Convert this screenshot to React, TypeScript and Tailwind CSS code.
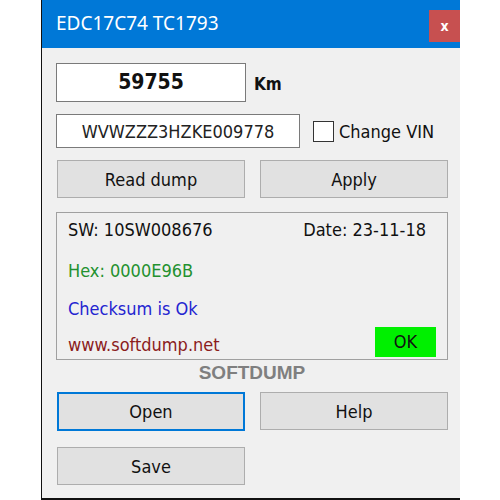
import React from 'react';

const ui = { fontFamily: '"DejaVu Sans Condensed", "DejaVu Sans", sans-serif' };

function WinButton({ label, focused }: { label: string; focused?: boolean }) {
    return (
        <button
            className={
                focused
                    ? 'flex h-[39px] w-[188px] items-center justify-center border-2 border-[#0078d7] bg-[#e1e1e1] text-[18px] text-[#111]'
                    : 'flex h-[38px] w-[188px] items-center justify-center border border-[#adadad] bg-[#e1e1e1] text-[18px] text-[#111]'
            }
            style={ui}
        >
            {label}
        </button>
    );
}

export default function App() {
    return (
        <div className="flex h-[500px] w-[500px] bg-white">
            <div className="ml-[41px] flex h-[500px] w-[419px] flex-col border-b-2 border-l border-[#111] bg-[#f0f0f0]">
                {/* title bar */}
                <div className="flex h-[48px] items-start justify-between bg-[#0078d7]">
                    <span
                        className="mt-[9px] ml-[14px] text-[19px] text-white"
                        style={{ fontFamily: '"Noto Sans", "Open Sans", sans-serif' }}
                    >
                        EDC17C74 TC1793
                    </span>
                    <div className="mt-[10px] flex h-[32px] w-[31px] items-center justify-center bg-[#c75050] text-[14px] font-bold text-white" style={ui}>
                        x
                    </div>
                </div>

                <div className="flex flex-col pl-[14px]" style={ui}>
                    {/* km */}
                    <div className="mt-[15px] flex items-center gap-[8px]">
                        <div className="flex h-[39px] w-[190px] items-center justify-center border border-[#7a7a7a] bg-white text-[21px] font-bold text-[#111]">
                            59755
                        </div>
                        <span className="mt-[4px] text-[17px] font-bold text-[#111]">Km</span>
                    </div>

                    {/* vin */}
                    <div className="mt-[12px] flex items-center">
                        <div className="flex h-[34px] w-[244px] items-center justify-center border border-[#7a7a7a] bg-white text-[18px] text-[#222]">
                            WVWZZZ3HZKE009778
                        </div>
                        <div className="ml-[13px] h-[21px] w-[21px] border border-[#333] bg-white"></div>
                        <span className="ml-[5px] text-[18px] text-[#111]">Change VIN</span>
                    </div>

                    {/* actions */}
                    <div className="mt-[12px] flex gap-[15px] pl-[1px]">
                        <WinButton label="Read dump" />
                        <WinButton label="Apply" />
                    </div>

                    {/* info box */}
                    <div className="mt-[14px] flex h-[148px] w-[392px] flex-col border border-[#a0a0a0] px-[11px] text-[18px]">
                        <div className="mt-[5px] flex h-[22px] items-center justify-between pr-[10px] text-[#111]">
                            <span>SW: 10SW008676</span>
                            <span>Date: 23-11-18</span>
                        </div>
                        <div className="mt-[19px] flex h-[22px] items-center text-[#23912f]">Hex: 0000E96B</div>
                        <div className="mt-[16px] flex h-[22px] items-center text-[#2424d0]">Checksum is Ok</div>
                        <div className="mt-[6px] flex items-center justify-between">
                            <span className="mt-[6px] text-[#8b1c1c]">www.softdump.net</span>
                            <div className="flex h-[30px] w-[61px] items-center justify-center bg-[#00f000] text-[#111]">OK</div>
                        </div>
                    </div>

                    <div
                        className="w-[392px] text-center text-[19px] leading-[26px] font-bold text-[#7f7f7f]"
                        style={{ fontFamily: '"Liberation Sans", Arial, sans-serif' }}
                    >
                        SOFTDUMP
                    </div>

                    <div className="mt-[6px] flex gap-[15px] pl-[1px]">
                        <WinButton label="Open" focused />
                        <WinButton label="Help" />
                    </div>
                    <div className="mt-[16px] flex pl-[1px]">
                        <WinButton label="Save" />
                    </div>
                </div>
            </div>
        </div>
    );
}
